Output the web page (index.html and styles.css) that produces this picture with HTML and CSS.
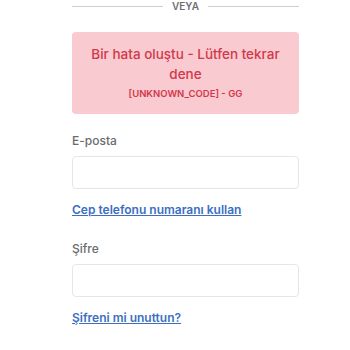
FILE: index.html
```html
<!DOCTYPE html>
<html lang="tr">
<head>
    <meta charset="UTF-8">
    <meta name="viewport" content="width=device-width, initial-scale=1.0">
    <title>Giriş yap</title>
    <link rel="stylesheet" href="styles.css">
</head>
<body>

<div class="container">
    <div class="divider">
        <span class="line"></span>
        <span class="divider-text">VEYA</span>
        <span class="line"></span>
    </div>

    <div class="error-box">
        <p class="error-title">Bir hata oluştu - Lütfen tekrar dene</p>
        <p class="error-code">[UNKNOWN_CODE] - GG</p>
    </div>

    <div class="field">
        <label class="label" for="email">E-posta</label>
        <input class="input" id="email" type="text">
        <a class="link" href="#">Cep telefonu numaranı kullan</a>
    </div>

    <div class="field second">
        <label class="label" for="password">Şifre</label>
        <input class="input" id="password" type="password">
        <a class="link" href="#">Şifreni mi unuttun?</a>
    </div>
</div>

</body>
</html>
```

FILE: styles.css
```css
body {
    margin: 0;
    font-family: Inter, "Noto Sans", sans-serif;
    background-color: #ffffff;
}

.container {
    width: 227px;
    margin-left: 72px;
    display: flex;
    flex-direction: column;
}

.divider {
    display: flex;
    align-items: center;
    gap: 9px;
    height: 12px;
}

.line {
    flex: 1;
    height: 1px;
    background-color: #cfcfd3;
}

.divider-text {
    font-size: 10px;
    font-weight: 600;
    color: #6f7073;
}

.error-box {
    margin-top: 20px;
    background-color: #f9cacf;
    border-radius: 4px;
    padding: 12px 12px 10px;
    text-align: center;
    color: #d2384c;
}

.error-title {
    margin: 0;
    font-size: 13.5px;
    font-weight: 500;
    line-height: 20px;
}

.error-code {
    margin: 0;
    font-size: 9.5px;
    font-weight: 600;
    line-height: 20px;
}

.field {
    display: flex;
    flex-direction: column;
    margin-top: 18px;
}

.field.second {
    margin-top: 22px;
}

.label {
    font-size: 12px;
    font-weight: 500;
    color: #6b6b6e;
    line-height: 18px;
}

.input {
    margin-top: 6px;
    height: 33px;
    box-sizing: border-box;
    border: 1px solid #e6e6e8;
    border-radius: 4px;
    background: #fff;
}

.link {
    margin-top: 13px;
    font-size: 12px;
    font-weight: 600;
    color: #3c6fc1;
    text-decoration: underline;
    line-height: 16px;
    align-self: flex-start;
}
```
